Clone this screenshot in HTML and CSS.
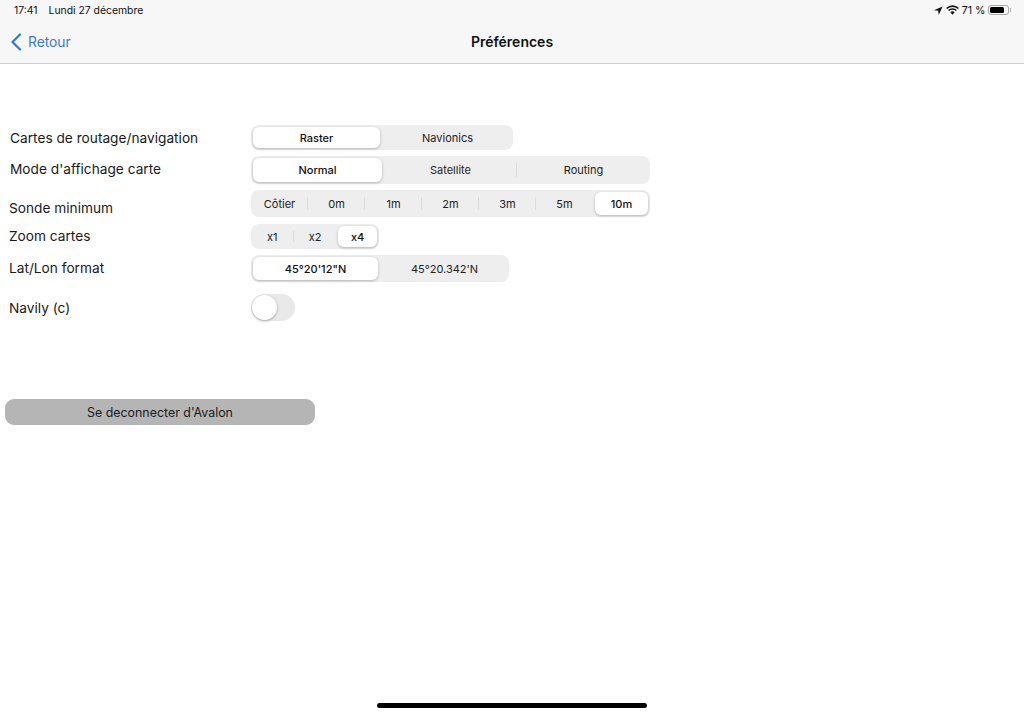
FILE: index.html
```html
<!DOCTYPE html>
<html lang="fr">
<head>
<meta charset="utf-8">
<title>Préférences</title>
<link rel="stylesheet" href="styles.css">
</head>
<body>
<header class="top">
  <div class="status">
    <div class="status-left"><span>17:41</span><span>Lundi 27 décembre</span></div>
    <div class="status-right">
      <svg class="ico-loc" width="9" height="9" viewBox="0 0 9 9"><path d="M8.6.4 0 4.3l4.2.4.5 4.2z" fill="#111"/></svg>
      <svg class="ico-wifi" width="13" height="10" viewBox="0 0 12 9"><path d="M.6 3.1a7.8 7.8 0 0 1 10.8 0M2.4 5a5.2 5.2 0 0 1 7.2 0" fill="none" stroke="#111" stroke-width="1.4"/><path d="M4 6.6a2.9 2.9 0 0 1 4 0L6 8.8z" fill="#111"/></svg>
      <span class="pct">71 %</span>
      <span class="battery"><span class="battery-fill"></span></span>
      <span class="battery-tip"></span>
    </div>
  </div>
  <nav class="nav">
    <a class="back">
      <svg width="12" height="18" viewBox="0 0 12 18"><path d="M10 1.5 2.5 9l7.5 7.5" fill="none" stroke="#3478d8" stroke-width="2.2" stroke-linecap="round" stroke-linejoin="round"/></svg>
      <span>Retour</span>
    </a>
    <h1 class="title">Préférences</h1>
  </nav>
</header>
<main class="main">
  <section class="settings">
    <div class="row row-a">
      <label class="label label-wide">Cartes de routage/navigation</label>
      <div class="seg seg-carte">
        <span class="item on">Raster</span><span class="item">Navionics</span>
      </div>
    </div>
    <div class="row row-b">
      <label class="label label-wide label-up">Mode d'affichage carte</label>
      <div class="seg seg-mode">
        <span class="item on">Normal</span><span class="item">Satellite</span><span class="item sep">Routing</span>
      </div>
    </div>
    <div class="row row-c">
      <label class="label label-low">Sonde minimum</label>
      <div class="seg seg-sonde">
        <span class="item">Côtier</span><span class="item sep">0m</span><span class="item sep">1m</span><span class="item sep">2m</span><span class="item sep">3m</span><span class="item sep">5m</span><span class="item on">10m</span>
      </div>
    </div>
    <div class="row row-d">
      <label class="label label-up">Zoom cartes</label>
      <div class="seg seg-zoom">
        <span class="item">x1</span><span class="item sep">x2</span><span class="item on">x4</span>
      </div>
    </div>
    <div class="row row-e">
      <label class="label label-up">Lat/Lon format</label>
      <div class="seg seg-lat">
        <span class="item on">45°20'12"N</span><span class="item">45°20.342'N</span>
      </div>
    </div>
    <div class="row row-f">
      <label class="label">Navily (c)</label>
      <span class="toggle"><span class="knob"></span></span>
    </div>
  </section>
  <button class="logout">Se deconnecter d'Avalon</button>
</main>
<div class="home"></div>
</body>
</html>
```
FILE: styles.css
```css
* { box-sizing: border-box; }
html, body { margin: 0; height: 100%; }
body {
  width: 1024px;
  height: 715px;
  overflow: hidden;
  background: #fff;
  color: #111;
  font-family: Inter, "Liberation Sans", sans-serif;
  display: flex;
  flex-direction: column;
}
.top {
  height: 64px;
  background: #f7f7f7;
  border-bottom: 1px solid #cfcfd1;
  flex: none;
}
.status {
  height: 20px;
  padding: 0 13px 0 14px;
  display: flex;
  justify-content: space-between;
  align-items: center;
  font-size: 10.4px;
}
.status-left { display: flex; gap: 11px; }
.status-right { display: flex; align-items: center; }
.ico-loc { margin-right: 3px; }
.ico-wifi { margin-right: 3px; }
.pct { font-size: 10.6px; margin-right: 2px; }
.battery {
  width: 21px;
  height: 10px;
  border: 1px solid #a8a8a8;
  border-radius: 3px;
  padding: 1px;
  display: flex;
}
.battery-fill { width: 14px; background: #000; border-radius: 1.5px; }
.battery-tip { width: 1.5px; height: 4px; background: #a8a8a8; margin-left: 1px; }
.nav {
  position: relative;
  height: 43px;
  display: flex;
  align-items: center;
  justify-content: center;
}
.back {
  position: absolute;
  left: 10px;
  top: 13px;
  display: flex;
  align-items: center;
  gap: 6px;
  color: #3a7bd5;
  font-size: 13.8px;
}
.title { margin: 0; font-size: 14px; font-weight: 600; color: #111; }
.main { flex: 1; display: flex; flex-direction: column; padding-top: 61px; }
.settings { display: flex; flex-direction: column; }
.row { display: flex; align-items: center; padding-left: 9px; }
.label { width: 242px; flex: none; font-size: 13.7px; color: #1a1a1a; }
.label-wide { padding-left: 1px; }
.label-up { padding-bottom: 2px; }
.label-low { align-self: flex-start; padding-top: 10px; }
.seg {
  display: grid;
  grid-auto-flow: column;
  grid-auto-columns: minmax(0, 1fr);
  padding: 2px 0;
  background: #eeeeef;
  border-radius: 8px;
  font-size: 11px;
  font-weight: 400;
  color: #222;
}
.item {
  display: flex;
  align-items: center;
  justify-content: center;
  position: relative;
}
.sep::before {
  content: "";
  position: absolute;
  left: -1px;
  top: 5px;
  bottom: 5px;
  width: 1px;
  background: #dcdcde;
}
.on {
  margin: 0 2px;
  background: #fff;
  border-radius: 6px;
  font-weight: 500;
  color: #111;
  box-shadow: 0 1px 3px rgba(0, 0, 0, .25);
}
.seg-carte { width: 262px; height: 25px; }
.seg-mode { width: 399px; height: 28px; }
.seg-sonde { width: 399px; height: 27px; }
.seg-zoom { width: 128px; height: 25px; }
.seg-lat { width: 258px; height: 27px; }
.row-b { margin-top: 6px; }
.row-c { margin-top: 6px; }
.row-d { margin-top: 7px; }
.row-e { margin-top: 6px; }
.row-f { margin-top: 12px; }
.toggle {
  width: 44px;
  height: 27px;
  border-radius: 14px;
  background: #e9e9ea;
  padding: 1px;
  display: flex;
}
.knob {
  width: 25px;
  height: 25px;
  border-radius: 50%;
  background: #fff;
  box-shadow: 0 1px 3px rgba(0, 0, 0, .3);
}
.logout {
  align-self: flex-start;
  margin: 78px 0 0 5px;
  width: 310px;
  height: 26px;
  border: 0;
  border-radius: 9px;
  background: #b5b5b5;
  color: #1a1a1a;
  font: 400 12.4px Inter, "Liberation Sans", sans-serif;
}
.home {
  position: absolute;
  left: 377px;
  top: 703px;
  width: 270px;
  height: 5px;
  border-radius: 3px;
  background: #000;
}
```
